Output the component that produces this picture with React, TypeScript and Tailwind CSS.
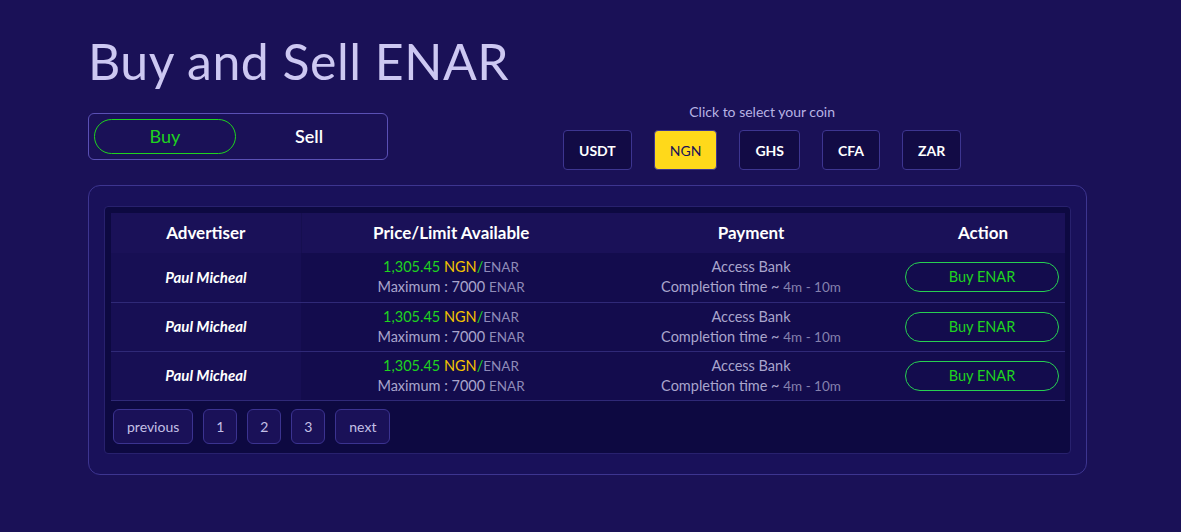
import React from "react";

const coins = ["USDT", "NGN", "GHS", "CFA", "ZAR"];
const rows = [0, 1, 2];

export default function App() {
  return (
    <div
      className="min-h-[532px] w-full bg-[#1a1157] pl-[88px] pr-[94px] pt-[30px] pb-[58px]"
      style={{ fontFamily: "Lato, 'Open Sans', sans-serif" }}
    >
      <h1 className="text-[50px] leading-[62px] font-normal text-[#cdc8f2] tracking-[0.5px]">
        Buy and Sell ENAR
      </h1>

      <div className="mt-[21px] flex items-start">
        <div className="flex h-[47px] w-[300px] items-center rounded-[6px] border border-[#5a50b4] px-[5px]">
          <button className="flex h-[35px] w-[142px] items-center justify-center rounded-full border border-[#1fd31f] text-[18px] text-[#1fd31f]">
            Buy
          </button>
          <button className="flex h-[35px] flex-1 items-center justify-center text-[18px] font-semibold text-white">
            Sell
          </button>
        </div>

        <div className="ml-[175px] flex flex-col items-center">
          <div className="-mt-[8px] text-[14px] leading-[14px] text-[#b8b3e4]">
            Click to select your coin
          </div>
          <div className="mt-[11px] flex gap-[22px]">
            {coins.map((c) =>
              c === "NGN" ? (
                <button
                  key={c}
                  className="flex h-[40px] items-center justify-center rounded-[4px] border border-[#3d3590] bg-[#ffd91a] px-[15px] text-[14px] text-[#1a1157]"
                >
                  {c}
                </button>
              ) : (
                <button
                  key={c}
                  className="flex h-[40px] items-center justify-center rounded-[4px] border border-[#3d3590] bg-[#120b45] px-[15px] text-[14px] font-bold text-white"
                >
                  {c}
                </button>
              )
            )}
          </div>
        </div>
      </div>

      <div className="mt-[15px] rounded-[12px] border border-[#3d3590] bg-[#19115a] px-[15px] pt-[20px] pb-[20px]">
        <div className="rounded-[4px] border border-[#28216e] bg-[#0d0941] pt-[6px] pl-[6px] pr-[5px] pb-[9px]">
          <table className="w-full border-collapse text-center">
            <thead>
              <tr className="h-[40px] bg-[#1a1158] text-[17px] font-bold text-white">
                <th className="w-[190px] font-bold">Advertiser</th>
                <th className="w-[300px] border-l border-[#160f50] font-bold">Price/Limit Available</th>
                <th className="w-[300px] font-bold">Payment</th>
                <th className="font-bold">Action</th>
              </tr>
            </thead>
            <tbody>
              {rows.map((r) => (
                <tr key={r} className="h-[49px] border-b border-[#2f2977] bg-[#130c4d]">
                  <td className="bg-[#170f54] text-[15px] font-bold italic text-white">
                    Paul Micheal
                  </td>
                  <td className="text-[14.5px] leading-[20px] text-[#a9a5cc]">
                    <div>
                      <span className="text-[#1fd31f]">1,305.45 </span>
                      <span className="text-[#f5c400]">NGN</span>
                      <span className="text-[#1fd31f]">/</span>
                      <span className="text-[13.5px] text-[#8f8bb8]">ENAR</span>
                    </div>
                    <div>
                      Maximum : 7000 <span className="text-[13.5px] text-[#8f8bb8]">ENAR</span>
                    </div>
                  </td>
                  <td className="text-[14.5px] leading-[20px] text-[#a9a5cc]">
                    <div>Access Bank</div>
                    <div>
                      Completion time ~ <span className="text-[13.5px] text-[#8581ad]">4m - 10m</span>
                    </div>
                  </td>
                  <td>
                    <div className="flex justify-end pr-[6px]">
                      <button className="flex h-[30px] w-[154px] items-center justify-center rounded-full border border-[#27d052] text-[14.5px] text-[#1fd31f]">
                        Buy ENAR
                      </button>
                    </div>
                  </td>
                </tr>
              ))}
            </tbody>
          </table>
          <div className="mt-[8px] flex gap-[10px] pl-[2px]">
            {["previous", "1", "2", "3", "next"].map((p) => (
              <button
                key={p}
                className={`flex h-[35px] items-center justify-center rounded-[6px] border border-[#3b3390] bg-[#1a1158] text-[14px] text-[#c4c0e6] ${
                  p.length === 1 ? "w-[34px]" : "px-[13px]"
                }`}
              >
                {p}
              </button>
            ))}
          </div>
        </div>
      </div>
    </div>
  );
}
